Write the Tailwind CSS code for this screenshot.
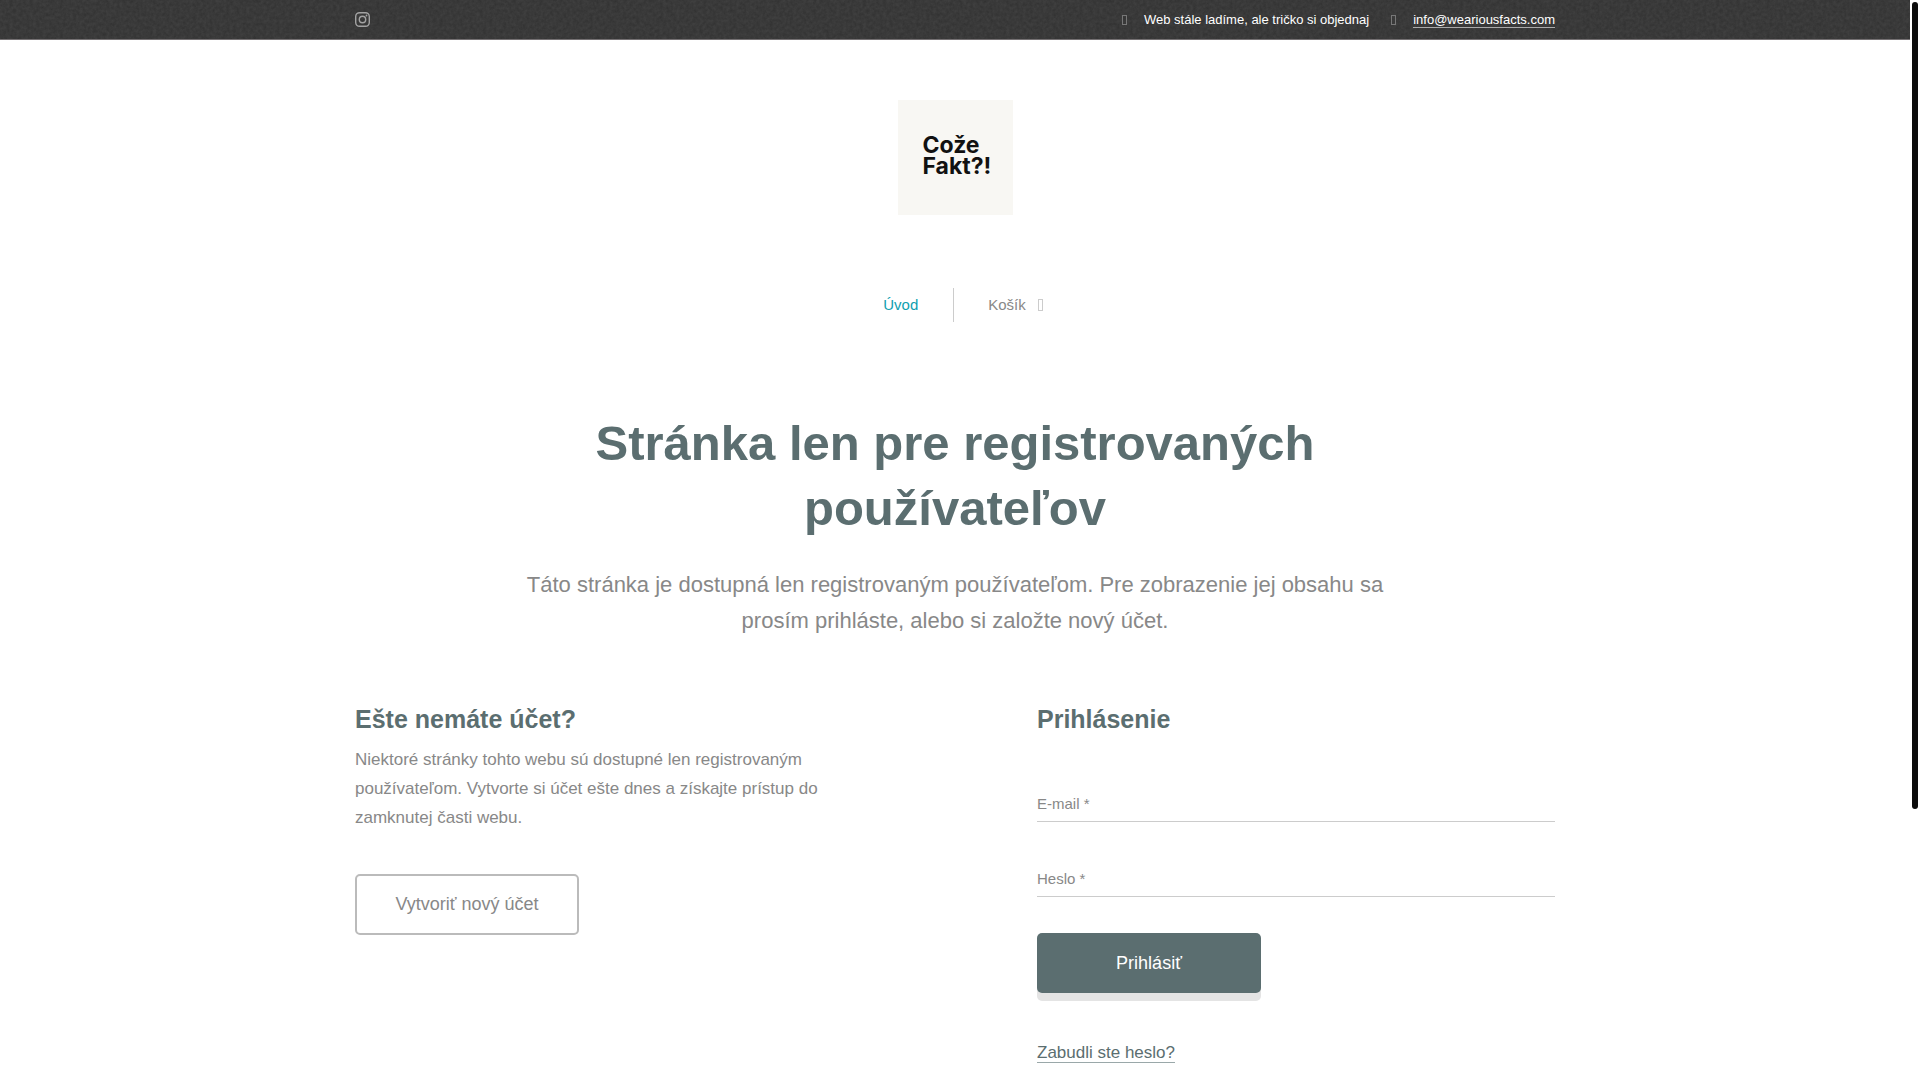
<!DOCTYPE html>
<html lang="sk">
<head>
    <meta charset="UTF-8">
    <meta name="viewport" content="width=device-width, initial-scale=1.0">
    <title>Cože Fakt?!</title>
    <script src="https://cdn.jsdelivr.net/npm/@tailwindcss/browser@4"></script>
</head>
<body class="relative h-screen overflow-hidden bg-white pr-[10px] font-['Liberation_Sans',sans-serif] text-[#888]">
    <!-- Top bar -->
    <div class="relative h-10 border-b border-[#757173] bg-[#3f3f3f]">
        <svg class="absolute inset-0 h-full w-full" aria-hidden="true">
            <filter id="grain" x="0" y="0" width="100%" height="100%">
                <feTurbulence type="fractalNoise" baseFrequency="0.3" numOctaves="4" seed="4"/>
                <feColorMatrix values="0 0 0 0 0  0 0 0 0 0  0 0 0 0 0  0.3 0 0 0 -0.06"/>
            </filter>
            <rect width="100%" height="100%" filter="url(#grain)"/>
        </svg>
        <div class="relative mx-auto flex h-full max-w-[1200px] items-center justify-between text-[13px] text-white">
            <a href="#" aria-label="Instagram">
                <svg class="size-[15px]" viewBox="0 0 15 15" fill="none" stroke="#a3a3a3" stroke-width="1.4">
                    <rect x="0.7" y="0.7" width="13.6" height="13.6" rx="3.8"/>
                    <circle cx="7.5" cy="7.5" r="3.2"/>
                    <circle cx="11.5" cy="3.5" r="0.9" fill="#a3a3a3" stroke="none"/>
                </svg>
            </a>
            <div class="flex items-center gap-[22px]">
                <div class="flex items-center gap-[17px]">
                    <span class="h-[10px] w-[5px] border border-[#777]"></span>
                    <span>Web stále ladíme, ale tričko si objednaj</span>
                </div>
                <div class="flex items-center gap-[17px]">
                    <span class="h-[10px] w-[5px] border border-[#777]"></span>
                    <a href="mailto:info@weariousfacts.com" class="border-b border-[#aaa] leading-[15px]">info@weariousfacts.com</a>
                </div>
            </div>
        </div>
    </div>

    <!-- Logo and menu -->
    <header class="flex flex-col items-center pt-[60px]">
        <a href="#" class="flex size-[115px] items-center bg-[#f8f7f3] pb-1 pl-[25px] font-['Inter',sans-serif] text-[23px] leading-[21px] font-bold text-[#111]">
            <span>Cože<br>Fakt?!</span>
        </a>
        <nav class="mt-[73px] flex h-[34px] items-center text-[15px]">
            <a href="#" class="px-[35px] text-[#0f9fb0]">Úvod</a>
            <a href="#" class="flex h-full items-center gap-3 border-l border-[#ccc] pr-[19px] pl-[34px]">
                Košík
                <span class="h-3 w-[5px] border border-[#ccc]"></span>
            </a>
        </nav>
    </header>

    <main class="mx-auto max-w-[1200px] pt-[89px]">
        <div class="mx-auto max-w-[900px] text-center">
            <h1 class="text-[49px] leading-[65px] font-bold text-[#5b6e70]">Stránka len pre registrovaných používateľov</h1>
            <p class="mt-[26px] text-[22px] leading-9">Táto stránka je dostupná len registrovaným používateľom. Pre zobrazenie jej obsahu sa prosím prihláste, alebo si založte nový účet.</p>
        </div>

        <div class="mt-[63px] grid grid-cols-2 gap-[164px]">
            <section>
                <h2 class="text-[25px] leading-[34px] font-bold text-[#5b6e70]">Ešte nemáte účet?</h2>
                <p class="mt-[9px] text-[17px] leading-[29px]">Niektoré stránky tohto webu sú dostupné len registrovaným používateľom. Vytvorte si účet ešte dnes a získajte prístup do zamknutej časti webu.</p>
                <button type="button" class="mt-[42px] h-[61px] w-56 rounded-[5px] border-2 border-[#bbb] text-[18px]">Vytvoriť nový účet</button>
            </section>
            <form>
                <h2 class="text-[25px] leading-[34px] font-bold text-[#5b6e70]">Prihlásenie</h2>
                <div class="mt-[50px] flex h-9 items-center border-b border-[#ccc] pt-[2px] text-[15px]">
                    <label for="email" class="pr-2">E-mail *</label>
                    <input id="email" type="email" class="min-w-0 flex-1 outline-none">
                </div>
                <div class="mt-[39px] flex h-9 items-center border-b border-[#ccc] pt-[2px] text-[15px]">
                    <label for="password" class="pr-2">Heslo *</label>
                    <input id="password" type="password" class="min-w-0 flex-1 outline-none">
                </div>
                <button type="submit" class="mt-9 block h-[60px] w-56 rounded-[5px] bg-[#5b6e70] text-[18px] text-white shadow-[0_8px_0_#e4e4e4]">Prihlásiť</button>
                <a href="#" class="mt-[51px] inline-block border-b border-[#9aa8a9] text-[17px] leading-[18px] text-[#5b6e70]">Zabudli ste heslo?</a>
            </form>
        </div>
    </main>

    <!-- Scroll indicator -->
    <div class="absolute top-[2px] right-[2px] h-[calc(75%-3px)] w-[6px] rounded-full bg-[#0c0c0c]"></div>
</body>
</html>
